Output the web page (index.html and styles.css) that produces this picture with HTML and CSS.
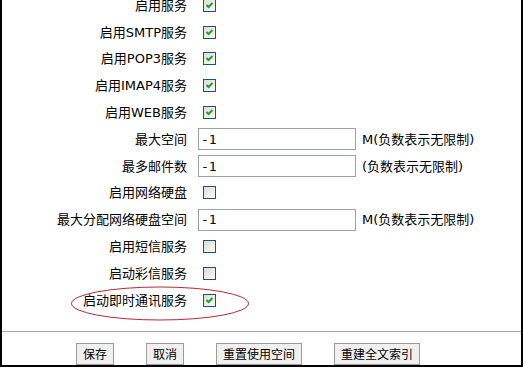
FILE: index.html
```html
<!DOCTYPE html>
<html lang="zh-CN">
<head>
    <meta charset="UTF-8">
    <title>邮件服务设置</title>
    <link rel="stylesheet" href="styles.css">
</head>
<body>
    <div class="panel">
        <div class="form">
            <div class="row"><span class="label">启用服务</span><span class="control"><span class="check on"></span></span></div>
            <div class="row"><span class="label">启用SMTP服务</span><span class="control"><span class="check on"></span></span></div>
            <div class="row"><span class="label">启用POP3服务</span><span class="control"><span class="check on"></span></span></div>
            <div class="row"><span class="label">启用IMAP4服务</span><span class="control"><span class="check on"></span></span></div>
            <div class="row"><span class="label">启用WEB服务</span><span class="control"><span class="check on"></span></span></div>
            <div class="row"><span class="label">最大空间</span><span class="control"><input class="field" type="text" value="-1"><span class="hint">M(负数表示无限制)</span></span></div>
            <div class="row"><span class="label">最多邮件数</span><span class="control"><input class="field" type="text" value="-1"><span class="hint">(负数表示无限制)</span></span></div>
            <div class="row"><span class="label">启用网络硬盘</span><span class="control"><span class="check"></span></span></div>
            <div class="row"><span class="label">最大分配网络硬盘空间</span><span class="control"><input class="field" type="text" value="-1"><span class="hint">M(负数表示无限制)</span></span></div>
            <div class="row"><span class="label">启用短信服务</span><span class="control"><span class="check"></span></span></div>
            <div class="row"><span class="label">启动彩信服务</span><span class="control"><span class="check"></span></span></div>
            <div class="row"><span class="label">启动即时通讯服务</span><span class="control"><span class="check on"></span></span></div>
        </div>

        <div class="divider"></div>

        <div class="actions">
            <button class="btn">保存</button>
            <button class="btn">取消</button>
            <button class="btn">重置使用空间</button>
            <button class="btn">重建全文索引</button>
        </div>

        <svg class="mark" width="182" height="36" viewBox="0 0 182 36">
            <ellipse cx="90" cy="17.5" rx="88.5" ry="16.5" fill="none" stroke="#b02a3a" stroke-width="1"/>
        </svg>
    </div>
</body>
</html>
```

FILE: styles.css
```css
body {
    margin: 0;
    background: #fff;
    font-family: "DejaVu Sans", "Noto Sans CJK SC", sans-serif;
    font-size: 13px;
    color: #000;
}

.panel {
    position: relative;
    width: 523px;
    height: 367px;
    box-sizing: border-box;
    border: 2px solid #000;
    border-top: none;
    overflow: hidden;
}

.form {
    margin-top: -8px;
}

.row {
    display: flex;
    align-items: center;
    height: 26.8px;
}

.label {
    width: 185px;
    text-align: right;
    line-height: 15px;
    white-space: nowrap;
}

.control {
    display: flex;
    align-items: center;
}

.check {
    display: inline-block;
    width: 13px;
    height: 13px;
    box-sizing: border-box;
    margin-left: 16px;
    border: 1px solid #1c5180;
    background: linear-gradient(135deg, #dcdcd5, #fbfbf9);
}

.check.on {
    background-image: url("data:image/svg+xml;utf8,<svg xmlns='http://www.w3.org/2000/svg' width='11' height='11'><path d='M2.5 5 L4.5 7 L8.5 3' fill='none' stroke='%2321a121' stroke-width='2'/></svg>"), linear-gradient(135deg, #dcdcd5, #fbfbf9);
    background-repeat: no-repeat;
}

.field {
    width: 158px;
    height: 22px;
    box-sizing: border-box;
    margin: 0 0 0 11px;
    padding: 0 2px;
    border: 1px solid #9aa3ab;
    font-family: "DejaVu Sans Mono", monospace;
    font-size: 13px;
    color: #000;
}

.hint {
    margin-left: 6px;
    line-height: 15px;
}

.divider {
    margin-top: 17px;
    height: 1px;
    background: #a5a5a5;
}

.actions {
    display: flex;
    gap: 32px;
    padding-left: 74px;
    margin-top: 11px;
}

.btn {
    height: 22px;
    padding: 0 6px;
    border: 1px solid #9c9c9c;
    background: #f0f0f0;
    font-family: "Noto Sans CJK SC", sans-serif;
    font-size: 12px;
    color: #000;
}

.mark {
    position: absolute;
    left: 68px;
    top: 286px;
}
```
